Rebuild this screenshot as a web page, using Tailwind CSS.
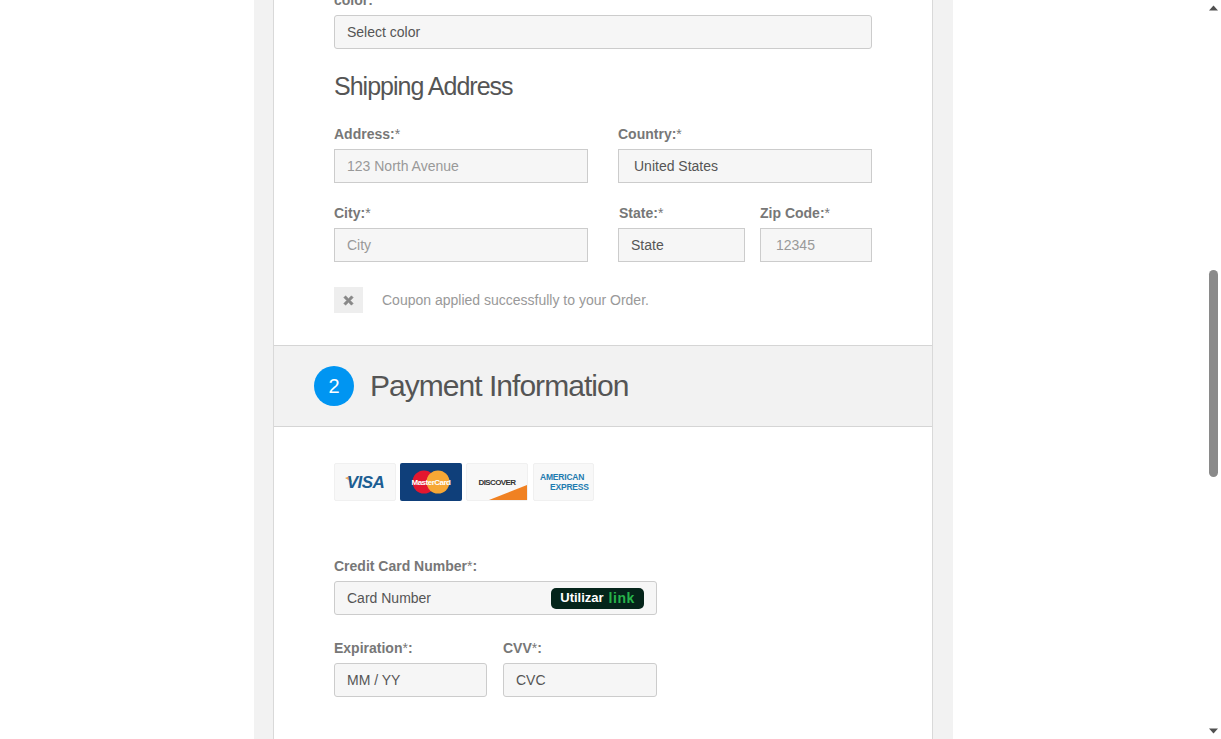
<!DOCTYPE html>
<html lang="en">
<head>
  <meta charset="UTF-8" />
  <title>Checkout</title>
  <script src="https://cdn.jsdelivr.net/npm/@tailwindcss/browser@4"></script>
</head>
<body class="h-[739px] overflow-hidden bg-white font-['Liberation_Sans',Arial,sans-serif] text-[14px] text-[#666]">
  <div class="flex h-[739px]">
    <!-- page -->
    <div class="flex-1 overflow-hidden">
      <div class="ml-[254px] w-[699px] h-[739px] bg-[#f2f2f2] px-[19px] overflow-hidden">
        <div class="w-[660px] h-[739px] bg-white border-x border-[#d9d9d9] overflow-hidden">

          <!-- shipping -->
          <div class="px-[60px] h-[345px] overflow-hidden">
            <label class="block -mt-[8px] mb-[6px] h-[17px] leading-[17px] font-bold text-[#777]">color:</label>
            <div class="w-[538px] h-[34px] leading-[32px] px-[12px] bg-[#f6f6f6] border border-[#ccc] rounded-[3px] text-[#555]">Select color</div>

            <h2 class="mt-[20px] h-[34px] leading-[34px] text-[25px] tracking-[-1px] text-[#555]">Shipping Address</h2>

            <div class="mt-[23px] grid grid-cols-[254px_254px] gap-x-[30px]">
              <div>
                <label class="block h-[17px] leading-[17px] mb-[6px] text-[#777]"><b>Address:</b>*</label>
                <div class="h-[34px] leading-[32px] px-[12px] bg-[#f6f6f6] border border-[#ccc] text-[#999]">123 North Avenue</div>
              </div>
              <div>
                <label class="block h-[17px] leading-[17px] mb-[6px] text-[#777]"><b>Country:</b>*</label>
                <div class="h-[34px] leading-[32px] px-[15px] bg-[#f6f6f6] border border-[#ccc] text-[#555]">United States</div>
              </div>
            </div>

            <div class="mt-[22px] grid grid-cols-[254px_127px_112px] gap-x-[15px]">
              <div class="mr-[-15px] w-[254px]">
                <label class="block h-[17px] leading-[17px] mb-[6px] text-[#777]"><b>City:</b>*</label>
                <div class="h-[34px] leading-[32px] px-[12px] bg-[#f6f6f6] border border-[#ccc] text-[#999]">City</div>
              </div>
              <div class="ml-[15px] w-[127px]">
                <label class="block h-[17px] leading-[17px] mb-[6px] pl-[1px] text-[#777]"><b>State:</b>*</label>
                <div class="h-[34px] leading-[32px] px-[12px] bg-[#f6f6f6] border border-[#ccc] text-[#555]">State</div>
              </div>
              <div class="ml-[15px] w-[112px]">
                <label class="block h-[17px] leading-[17px] mb-[6px] text-[#777]"><b>Zip Code:</b>*</label>
                <div class="h-[34px] leading-[32px] px-[15px] bg-[#f6f6f6] border border-[#ccc] text-[#999]">12345</div>
              </div>
            </div>

            <div class="mt-[25px] flex items-center">
              <div class="w-[29px] h-[26px] bg-[#eee] flex items-center justify-center">
                <svg class="w-[13px] h-[13px]" viewBox="0 0 13 13"><path d="M1.8 3.6 3.6 1.8 6.5 4.7 9.4 1.8 11.2 3.6 8.3 6.5 11.2 9.4 9.4 11.2 6.5 8.3 3.6 11.2 1.8 9.4 4.7 6.5Z" fill="#888" stroke="#888" stroke-width=".6" stroke-linejoin="round"/></svg>
              </div>
              <span class="ml-[19px] text-[#999]">Coupon applied successfully to your Order.</span>
            </div>
          </div>

          <!-- section head -->
          <div class="h-[82px] -mx-px bg-[#f2f2f2] border-y border-[#d5d5d5] flex items-center pl-[41px]">
            <span class="w-[40px] h-[40px] rounded-full bg-[#0095f2] text-white text-[20px] flex items-center justify-center">2</span>
            <h2 class="ml-[16px] mb-[2px] text-[30px] tracking-[-0.97px] text-[#555]">Payment Information</h2>
          </div>

          <!-- payment -->
          <div class="px-[60px] pt-[36px]">
            <div class="flex h-[38px]">
              <div class="w-[62px] h-[38px] bg-[#f8f8f8] border border-[#f0f0f0] rounded-[2px]">
                <svg class="w-full h-full" viewBox="0 0 60 36">
                  <path d="M10 14 15 12 17 18Z" fill="#e9a84a"/>
                  <text x="30.5" y="24" text-anchor="middle" font-family="Liberation Sans" font-size="17" font-weight="700" font-style="italic" fill="#1c5e93" letter-spacing="-.6">VISA</text>
                </svg>
              </div>
              <div class="ml-[4px] w-[62px] h-[38px] bg-[#0f3f7a] rounded-[2px]">
                <svg class="w-full h-full" viewBox="0 0 62 38">
                  <circle cx="24" cy="19" r="11.5" fill="#e3172f"/>
                  <circle cx="38" cy="19" r="11.5" fill="#f6a735"/>
                  <text x="31" y="22" text-anchor="middle" font-family="Liberation Sans" font-size="8" font-weight="700" fill="#fff" letter-spacing="-.5">MasterCard</text>
                </svg>
              </div>
              <div class="ml-[4px] w-[62px] h-[38px] bg-[#f8f8f8] border border-[#f0f0f0] rounded-[2px]">
                <svg class="w-full h-full" viewBox="0 0 60 36">
                  <path d="M22 36 60 21V36Z" fill="#f08122"/>
                  <text x="30" y="21" text-anchor="middle" font-family="Liberation Sans" font-size="8" font-weight="700" fill="#333" letter-spacing="-.6">DISCOVER</text>
                </svg>
              </div>
              <div class="ml-[5px] w-[61px] h-[38px] bg-[#f8f8f8] border border-[#f0f0f0] rounded-[2px]">
                <svg class="w-full h-full" viewBox="0 0 59 36">
                  <text x="6" y="16" font-family="Liberation Sans" font-size="8.5" font-weight="700" fill="#1f7cb0" letter-spacing="-.2">AMERICAN</text>
                  <text x="16" y="25.5" font-family="Liberation Sans" font-size="8.5" font-weight="700" fill="#1f7cb0" letter-spacing="-.2">EXPRESS</text>
                </svg>
              </div>
            </div>

            <label class="block mt-[57px] h-[17px] leading-[17px] mb-[6px] text-[#777]"><b>Credit Card Number</b>*<b>:</b></label>
            <div class="w-[323px] h-[34px] pl-[12px] pr-[12px] bg-[#f6f6f6] border border-[#ccc] rounded-[3px] flex items-center justify-between text-[#555]">
              <span>Card Number</span>
              <span class="w-[93px] h-[21px] bg-[#04241a] rounded-[5px] flex items-center justify-center gap-[5px] font-bold text-white">
                <span class="text-[13px]">Utilizar</span>
                <span class="text-[#27b34b] tracking-[0.5px]">link</span>
              </span>
            </div>

            <div class="mt-[25px] flex">
              <div class="w-[153px]">
                <label class="block h-[17px] leading-[17px] mb-[6px] text-[#777]"><b>Expiration</b>*<b>:</b></label>
                <div class="h-[34px] leading-[32px] px-[12px] bg-[#f6f6f6] border border-[#ccc] rounded-[3px] text-[#555]">MM / YY</div>
              </div>
              <div class="ml-[16px] w-[154px]">
                <label class="block h-[17px] leading-[17px] mb-[6px] text-[#777]"><b>CVV</b>*<b>:</b></label>
                <div class="h-[34px] leading-[32px] px-[12px] bg-[#f6f6f6] border border-[#ccc] rounded-[3px] text-[#555]">CVC</div>
              </div>
            </div>
          </div>

        </div>
      </div>
    </div>

    <!-- scrollbar -->
    <div class="relative w-[15px] h-[739px] bg-white">
      <svg class="absolute left-[3px] top-[5px] w-[9px] h-[6px]" viewBox="0 0 9 6"><path d="M4.5 0.5 9 5.5H0Z" fill="#505050"/></svg>
      <div class="absolute left-[3px] top-[270px] w-[9px] h-[207px] rounded-[5px] bg-[#8a8a8a]"></div>
      <svg class="absolute left-[3px] bottom-[5px] w-[9px] h-[6px]" viewBox="0 0 9 6"><path d="M0 0.5H9L4.5 5.5Z" fill="#505050"/></svg>
    </div>
  </div>
</body>
</html>
